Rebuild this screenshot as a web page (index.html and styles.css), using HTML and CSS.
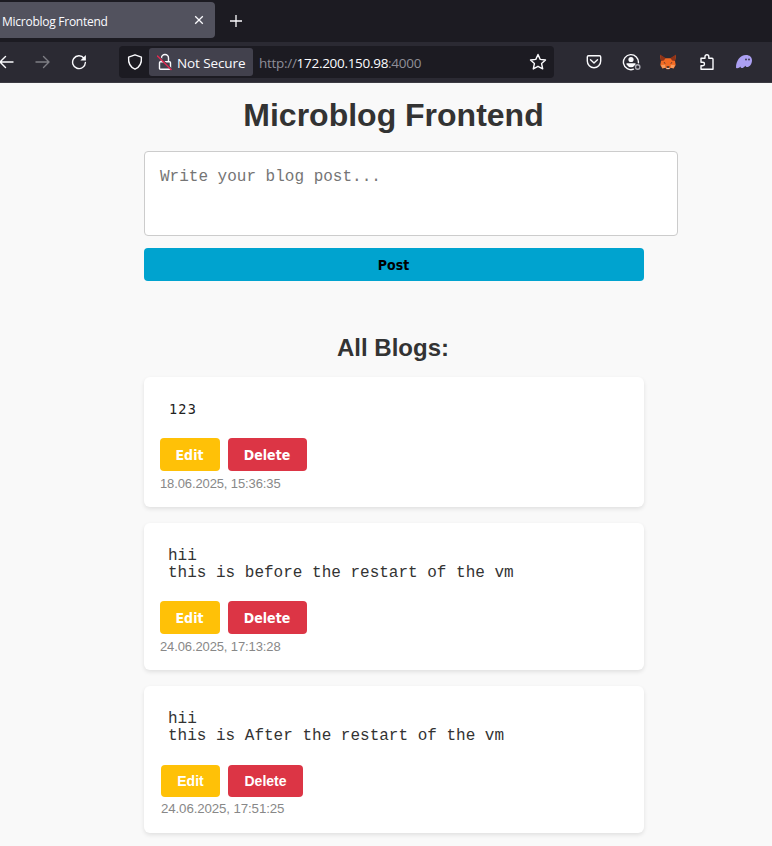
FILE: index.html
```html
<!DOCTYPE html>
<html lang="en">
<head>
<meta charset="utf-8">
<title>Microblog Frontend</title>
<link rel="stylesheet" href="styles.css">
</head>
<body>
<header class="browser">
  <div class="tabs">
    <div class="tab"><span class="tab-title">Microblog Frontend</span>
      <svg class="close" width="10" height="10" viewBox="0 0 10 10"><path d="M1.2 1.2l7.6 7.6M8.800 1.200l-7.600 7.600"/></svg>
    </div>
    <svg class="plus" width="14" height="14" viewBox="0 0 14 14"><path d="M7 1v12M1 7h12"/></svg>
  </div>
  <div class="toolbar">
    <svg class="icon back" width="16" height="16" viewBox="0 0 16 16"><path d="M15 8H2M7.500 2.500L2 8l5.500 5.500"/></svg>
    <svg class="icon forward" width="16" height="16" viewBox="0 0 16 16"><path d="M1 8h13M8.500 2.500L14 8l-5.500 5.500"/></svg>
    <svg class="icon reload" width="16" height="16" viewBox="0 0 16 16"><path d="M13 4.200A6.400 6.400 0 1 0 14.400 8.500"/><path class="solid" d="M14.900 1v5.500H9.400z"/></svg>
    <div class="address">
      <svg class="icon shield" width="16" height="16" viewBox="0 0 16 16"><path d="M8 .8L14.400 3.200c.4 5-1.400 9.800-6.400 12C3 13 1.200 8.200 1.600 3.200z"/></svg>
      <div class="security">
        <svg class="icon" width="16" height="18" viewBox="0 0 16 18"><path d="M4.500 8V5a3.500 3.500 0 0 1 7 0v3M3.500 8.700h9q1 0 1 1v5.600q0 1-1 1h-9q-1 0-1-1V9.700q0-1 1-1z"/><path class="halo" d="M1.500 3l13.500 13.500"/><path class="slash" d="M.5 3l13.500 13.500"/></svg>
        <span>Not Secure</span>
      </div>
      <span class="url">http://<b>172.200.150.98</b>:4000</span>
      <svg class="icon star" width="18" height="18" viewBox="0 0 18 18"><path d="M9 1.500l2.200 4.900 5.300.6-3.900 3.600 1.100 5.300L9 13.300l-4.700 2.600 1.100-5.300L1.500 7l5.300-.6z"/></svg>
    </div>
    <div class="extensions">
      <svg class="icon" width="16" height="16" viewBox="0 0 16 16"><path d="M2.500 1.800h11q1.200 0 1.200 1.200V7a6.700 6.700 0 0 1-13.400 0V3q0-1.200 1.200-1.200zM4.500 5.800L8 9.100l3.500-3.300"/></svg>
      <svg class="icon" width="20" height="18" viewBox="0 0 20 18"><path d="M11.500 16.200A7.500 7.500 0 1 1 16.400 9.800"/><circle class="solid" cx="9" cy="6.500" r="2.600"/><path class="solid" d="M4.500 10.200h9v1.300q-1.800 2.700-4.500 2.700T4.500 11.500z"/><circle class="dot" cx="15.700" cy="14" r="2.200"/></svg>
      <svg class="fox" width="18" height="18" viewBox="0 0 18 18"><path fill="#f36a23" d="M1 2l5 3.300h6L17 2l-1 6 .7 4-2 3.500-3-.7-1.500 1.400H7.700L6.300 14.800l-3 .7-2-3.500L2 8z"/><path fill="#8f3318" d="M1 1.500L6.500 5 5 7.500 2 8zM17 1.500L11.500 5 13 7.500l3 .5z"/><path fill="#f69a5c" d="M2 12l4-.3.500 3-3 .5zM16 12l-4-.3-.5 3 3 .5z"/><path fill="#37312f" d="M4.800 9l2.200 1.500-2-.2zM13.200 9L11 10.500l2-.2zM7.500 13.300h3l-.4 1.500H7.900z"/><path fill="#dfcac0" d="M7.500 15h3v1h-3z"/></svg>
      <svg class="icon" width="16" height="18" viewBox="0 0 16 18"><path d="M2 5.300h4V3.600a1.900 1.900 0 0 1 3.800 0v1.700H13q1 0 1 1v9.900H2v-3.500h1.800a1.700 1.700 0 0 0 0-3.400H2z"/></svg>
      <svg width="18" height="18" viewBox="0 0 18 18"><path fill="#ab9ff2" d="M1 14.500C1 8 5 2 11 2c3.700 0 6 2.200 6 5.500 0 3.800-2.700 6.500-4.800 6.500-1 0-1.500-.6-1.700-1.300-1 1.300-2.600 2.500-4 2.300-.8-.1-1-.7-1-1.400-1 1.100-2 1.700-3.200 1.700-.9 0-1.300-.3-1.300-.8z"/><ellipse cx="11" cy="6.500" rx=".8" ry="1.100" fill="#2b2a33"/><ellipse cx="14" cy="6.500" rx=".8" ry="1.100" fill="#2b2a33"/></svg>
    </div>
  </div>
</header>
<main class="content">
  <h1>Microblog Frontend</h1>
  <textarea class="editor" placeholder="Write your blog post..."></textarea>
  <button class="button post">Post</button>
  <h2>All Blogs:</h2>
  <article class="card short">
    <pre class="digits">123</pre>
    <div class="actions"><button class="button edit">Edit</button><button class="button delete">Delete</button></div>
    <time>18.06.2025, 15:36:35</time>
  </article>
  <article class="card">
    <pre>hii
this is before the restart of the vm</pre>
    <div class="actions"><button class="button edit">Edit</button><button class="button delete">Delete</button></div>
    <time>24.06.2025, 17:13:28</time>
  </article>
  <article class="card compact">
    <pre>hii
this is After the restart of the vm</pre>
    <div class="actions"><button class="button edit">Edit</button><button class="button delete">Delete</button></div>
    <time>24.06.2025, 17:51:25</time>
  </article>
</main>
</body>
</html>
```
FILE: styles.css
```css
* { box-sizing: border-box; }
html { overflow: hidden; }
body { margin: 0; height: 846px; background: #f9f9f9; color: #333; font-family: "Liberation Sans", Arial, sans-serif; }
svg { display: block; flex: none; }
.browser { height: 83px; background: #2b2a33; color: #fbfbfe; font-family: "Open Sans", sans-serif; border-bottom: 1px solid #3c3b43; }
.tabs { height: 42px; background: #1c1b22; display: flex; align-items: center; }
.tab { width: 215px; height: 36px; margin-top: -2px; padding: 0 11px 0 2px; background: #52525e; border-radius: 0 4px 4px 0; display: flex; align-items: center; justify-content: space-between; font-size: 12px; letter-spacing: -.26px; }
.tab-title { padding-top: 2px; }
.close, .plus { fill: none; stroke: #fbfbfe; stroke-width: 1.3; }
.plus { margin: -1px 0 0 14px; }
.toolbar { height: 40px; display: flex; align-items: center; }
.icon { fill: none; stroke: #fbfbfe; stroke-width: 1.4; stroke-linecap: round; stroke-linejoin: round; }
.back { margin-left: -2px; }
.forward { margin-left: 21px; opacity: .4; }
.reload { margin-left: 20px; }
.solid { fill: #fbfbfe; stroke: none; }
.address { width: 435px; height: 32px; margin-left: 32px; background: #1c1b22; border-radius: 4px; display: flex; align-items: center; }
.shield { margin: 0 6px 0 8px; }
.security { width: 104px; height: 28px; padding-left: 8px; background: #42414d; border-radius: 3px; display: flex; align-items: center; gap: 4px; font-size: 13.5px; white-space: nowrap; letter-spacing: -.1px; }
.security span, .url { padding-top: 1px; }
.halo { stroke: #42414d; stroke-width: 1.5; }
.slash { stroke: #e22850; stroke-width: 1.5; }
.url { margin-left: 6px; font-size: 13.5px; color: #8f8f98; white-space: nowrap; letter-spacing: -.29px; }
.url b { color: #fbfbfe; font-weight: 400; }
.star { margin: 0 7px 0 auto; }
.extensions { flex: 1; display: flex; align-items: center; justify-content: space-between; padding: 0 19px 0 32px; }
.fox { margin: 0 3px 0 -3px; }
.dot { stroke: #aaa9b2; }
.content { width: 500px; margin-left: 144px; display: flex; flex-direction: column; }
h1 { margin: 14px 1px 0 0; height: 54px; font-size: 32px; line-height: 36px; text-align: center; }
.editor { width: 534px; height: 85px; border: 1px solid #ccc; border-radius: 4px; padding: 16px 15px; background: #fff; font: 16px/18px "Liberation Mono", "Courier New", monospace; resize: none; }
.editor::placeholder { color: #757575; opacity: 1; }
.button { height: 33px; padding: 1px 1px 0 0; border: 0; border-radius: 4px; color: #fff; font: 700 14px/32px "DejaVu Sans Condensed", "DejaVu Sans", sans-serif; font-stretch: condensed; }
.post { margin-top: 12px; background: #00a3cf; color: #000; }
h2 { margin: 53px 2px 16px 0; height: 27px; font-size: 24px; line-height: 27px; text-align: center; }
.card { height: 147px; margin-bottom: 16px; padding: 25px 16px 0; background: #fff; border-radius: 6px; box-shadow: 0 2px 4px rgba(0,0,0,.1); }
.short { height: 130px; padding-top: 24px; }
pre { margin: 0 0 18px; padding-left: 8px; height: 35px; font: 16px/17px "Liberation Mono", "Courier New", monospace; }
.short pre { height: 19px; color: #222; }
.digits { padding-left: 9px; font-family: "DejaVu Sans Mono", monospace; font-size: 13.5px; letter-spacing: 1.2px; }
.actions { display: flex; gap: 8px; }
.edit { width: 60px; background: #ffc107; }
.delete { width: 79px; background: #dc3545; }
time { display: block; margin-top: 5px; font-size: 13px; line-height: 15px; letter-spacing: -.12px; color: #888; }
.compact pre { margin-bottom: 19px; }
.compact .actions, .compact time { margin-left: 1px; }
.compact .button { height: 32px; padding: 0; font: 700 14px/32px "Liberation Sans", Arial, sans-serif; }
.compact .edit { width: 59px; }
.compact .delete { width: 75px; }
.compact time { margin-top: 4px; font-size: 13.3px; }
```
